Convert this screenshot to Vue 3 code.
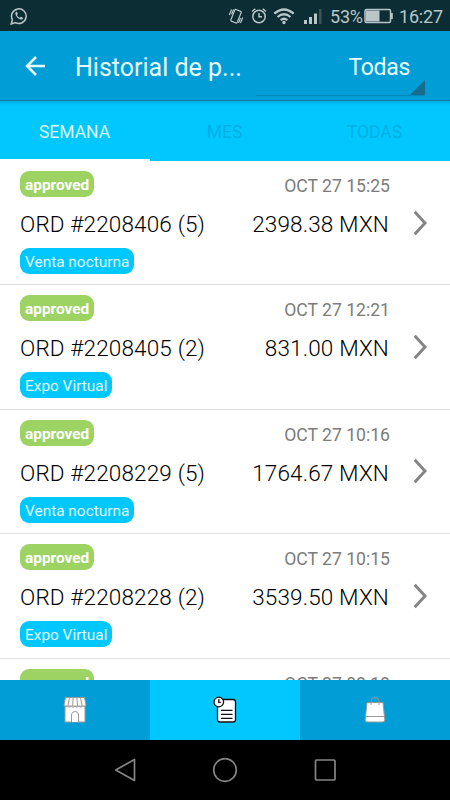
<script setup>
import { ref } from "vue";

const tabs = ["SEMANA", "MES", "TODAS"];
const activeTab = ref(0);
const activeNav = ref(1);

const orders = ref([
	{ id: 2208406, items: 5, total: "2398.38", date: "OCT 27 15:25", sale: "Venta nocturna" },
	{ id: 2208405, items: 2, total: "831.00", date: "OCT 27 12:21", sale: "Expo Virtual" },
	{ id: 2208229, items: 5, total: "1764.67", date: "OCT 27 10:16", sale: "Venta nocturna" },
	{ id: 2208228, items: 2, total: "3539.50", date: "OCT 27 10:15", sale: "Expo Virtual" },
	{ id: 2208227, items: 1, total: "942.00", date: "OCT 27 08:18", sale: "Expo Virtual" },
]);
</script>

<template>
	<div class="phone">
		<div class="status">
			<svg class="whatsapp" width="18" height="18" viewBox="0 0 18 18">
				<path d="M1.2 17l1.2-4.4A7.3 7.3 0 1 1 5.4 15.600Z" />
				<path class="fill" d="M6.300 4.800c-.9.500-1.200 1.500-.8 2.600 1 2.500 2.700 4.200 5.200 5 1.100.3 2.200-.2 2.400-1.500l-2-1.200-1.200 1c-1.400-.6-2.300-1.500-2.900-2.800l.8-1-.8-2.100z" />
			</svg>
			<div class="status-right">
				<svg class="vibrate" width="16" height="18" viewBox="0 0 16 18">
					<rect x="4.600" y="3" width="6.800" height="12.500" rx="1" transform="rotate(22 8 9.200)" />
					<path d="M3.600 2.500L1.300 8M5.600 2.500L3.600 7.500M14.700 10.500l-2.200 5.500M12.500 11l-2 5" />
				</svg>
				<svg class="alarm" width="16" height="18" viewBox="0 0 16 18">
					<circle cx="8" cy="9.500" r="6.200" />
					<path d="M8 6v3.700h3M1 4.500L4.200 1.800M15 4.500L11.800 1.800" />
				</svg>
				<svg class="wifi" width="22" height="18" viewBox="0 0 22 18">
					<path d="M1.300 6.700Q11-1.700 20.700 6.700M4.500 10Q11 4.400 17.500 10M7.700 13.100Q11 10.300 14.300 13.100" />
					<circle class="fill" cx="11" cy="15.500" r="1.700" />
				</svg>
				<svg class="signal" width="20" height="18" viewBox="0 0 20 18">
					<path class="fill" d="M1 13h3v4H1zM6 10h3v7H6zM11 6.500h3V17h-3z" />
					<path class="fill dim" d="M16 2h2.500v15H16z" />
				</svg>
				<span class="percent">53%</span>
				<svg class="battery" width="29" height="16" viewBox="0 0 29 16">
					<rect x="1" y="1.500" width="25.500" height="13" rx="1.500" />
					<path class="fill" d="M2 2.500h13.500v11H2zM27 5h1.800v6H27z" />
				</svg>
				<span class="clock">16:27</span>
			</div>
		</div>

		<header class="bar">
			<svg class="back" width="22" height="20" viewBox="0 0 22 20">
				<path d="M11 1L2 10l9 9M2 10h18" />
			</svg>
			<h1 class="title">Historial de p...</h1>
			<div class="spinner">
				<span class="choice">Todas</span>
				<svg class="corner" width="15" height="15" viewBox="0 0 15 15">
					<path d="M15 0v15H0z" />
				</svg>
			</div>
		</header>

		<nav class="tabs">
			<div
				v-for="(tab, i) in tabs"
				:key="tab"
				class="tab"
				:class="{ active: i === activeTab }"
				@click="activeTab = i"
			>
				<span>{{ tab }}</span>
			</div>
		</nav>

		<main class="list">
			<div v-for="order in orders" :key="order.id" class="order">
				<div class="order-top">
					<span class="pill approved">approved</span>
					<span class="date">{{ order.date }}</span>
				</div>
				<div class="order-main">
					<span class="name">ORD #{{ order.id }} ({{ order.items }})</span>
					<span class="total">{{ order.total }} MXN</span>
					<svg class="chevron" width="15" height="26" viewBox="0 0 15 26">
						<path d="M1.700 1.700L12 13 1.700 24.300" />
					</svg>
				</div>
				<span class="pill sale">{{ order.sale }}</span>
			</div>
		</main>

		<nav class="bottom">
			<div class="item" :class="{ active: activeNav === 0 }" @click="activeNav = 0">
				<svg class="grey" width="26" height="28" viewBox="0 0 26 28">
					<path d="M3 10h20v16H3zM3.500 1.500h19L24 9a2 2 0 0 1-3.400 1 2.200 2.200 0 0 1-3.800 0 2.200 2.200 0 0 1-3.800 0 2.200 2.200 0 0 1-3.800 0 2.200 2.200 0 0 1-3.800 0A2 2 0 0 1 2 9z" />
					<path d="M7.500 1.500L6 9.500M11.200 1.500l-.6 8M14.900 1.500l.6 8M18.500 1.500l1.500 8M9.500 26v-7a3.500 3.500 0 0 1 7 0v7" />
				</svg>
			</div>
			<div class="item" :class="{ active: activeNav === 1 }" @click="activeNav = 1">
				<svg class="black" width="26" height="28" viewBox="0 0 26 28">
					<rect x="5.500" y="3.500" width="18" height="22.500" rx="2.500" />
					<path d="M9 14.300h11.500M9 18.300h11.500M9 22.300h11.500" />
					<circle cx="6.800" cy="6" r="4.800" />
					<path d="M6.800 3v3.300h2" />
				</svg>
			</div>
			<div class="item" :class="{ active: activeNav === 2 }" @click="activeNav = 2">
				<svg class="grey" width="26" height="28" viewBox="0 0 26 28">
					<path d="M5 6.500h16l1.800 17.300q.1 2.200-2 2.200H5.200q-2.100 0-2-2.200zM3.300 20.500h19.400" />
					<path class="open" d="M9 9V5.500a4 4 0 0 1 8 0V9" />
				</svg>
			</div>
		</nav>

		<div class="system">
			<svg width="24" height="26" viewBox="0 0 24 26"><path d="M21.500 2.500v21L2.700 13z" /></svg>
			<svg width="26" height="26" viewBox="0 0 26 26"><circle cx="13" cy="13" r="11.300" /></svg>
			<svg width="24" height="26" viewBox="0 0 24 26"><rect x="2.500" y="3" width="19.500" height="20" rx="1" /></svg>
		</div>
	</div>
</template>

<style>
body {
	margin: 0;
	overflow: hidden;
}
</style>

<style scoped>
.phone {
	width: 450px;
	height: 800px;
	display: flex;
	flex-direction: column;
	overflow: hidden;
	background: white;
	font-family: Roboto, "Noto Sans", sans-serif;
}
svg {
	display: block;
	flex-shrink: 0;
	fill: none;
}
.status {
	height: 31px;
	flex-shrink: 0;
	display: flex;
	align-items: center;
	justify-content: space-between;
	padding: 0 8px 0 10px;
	background: #0c2d33;
	color: #b9c6c8;
}
.status svg {
	stroke: #b9c6c8;
	stroke-width: 1.5;
}
.status .fill {
	fill: #b9c6c8;
	stroke: none;
}
.status .dim {
	fill: #3c555b;
}
.status .vibrate {
	stroke-width: 1.2;
}
.status-right {
	display: flex;
	align-items: center;
	font-size: 18px;
	line-height: 31px;
}
.alarm {
	margin-left: 7px;
}
.wifi {
	margin-left: 6px;
}
.status .wifi path {
	stroke-width: 2.3;
}
.signal {
	margin-left: 8px;
}
.percent {
	width: 33px;
	margin-left: 7px;
	padding-top: 2px;
	letter-spacing: -0.2px;
}
.battery {
	margin-left: 1px;
}
.clock {
	margin-left: 6px;
	padding-top: 2px;
	width: 43px;
	letter-spacing: -0.2px;
}
.bar {
	height: 70px;
	flex-shrink: 0;
	display: flex;
	box-sizing: border-box;
	padding: 0 25px 0 25px;
	background: #009dd6;
	color: #e8faff;
	border-bottom: 1px solid #087ba9;
}
.back {
	margin-top: 25px;
	stroke: #e8faff;
	stroke-width: 2.5;
}
.title {
	width: 181px;
	margin: 0 0 0 28px;
	font-size: 25px;
	font-weight: 400;
	line-height: 73px;
	white-space: nowrap;
}
.spinner {
	flex: 1;
	height: 65px;
	box-sizing: border-box;
	display: flex;
	align-items: flex-end;
	justify-content: flex-end;
	border-bottom: 1px solid #0788ba;
	font-size: 23px;
	line-height: 54px;
}
.choice {
	letter-spacing: -0.3px;
}
.corner {
	fill: #176d90;
}
.tabs {
	height: 60px;
	flex-shrink: 0;
	display: flex;
	background: linear-gradient(#00a9dc, #00c8ff 4px);
}
.tab {
	width: 150px;
	box-sizing: border-box;
	padding-right: 1px;
	text-align: center;
	font-size: 17.500px;
	line-height: 62px;
	color: #00afe3;
}
.tab.active {
	color: #d9f8ff;
	border-bottom: 2px solid white;
}
.list {
	flex: 1;
	min-height: 0;
	overflow: hidden;
}
.order {
	height: 124.400px;
	box-sizing: border-box;
	padding: 10px 22px 0 20px;
	border-bottom: 1.500px solid #dedede;
}
.order-top {
	height: 26px;
	display: flex;
	justify-content: space-between;
}
.pill {
	display: block;
	width: fit-content;
	height: 26px;
	box-sizing: border-box;
	padding: 0 5px;
	border-radius: 9px;
	font-size: 15.400px;
	line-height: 28px;
	white-space: nowrap;
}
.approved {
	background: #9cd363;
	color: white;
	font-weight: 700;
}
.sale {
	background: #00c8ff;
	color: #e0f9ff;
}
.date {
	padding-right: 38px;
	font-size: 17.600px;
	line-height: 30px;
	color: #7c7c7c;
}
.order-main {
	height: 51px;
	display: flex;
	align-items: center;
	font-size: 22.500px;
	font-weight: 300;
	letter-spacing: 0.150px;
	color: #000;
}
.name {
	padding-top: 3px;
}
.total {
	margin-left: auto;
	padding-top: 3px;
}
.chevron {
	margin-left: 24px;
	stroke: #858585;
	stroke-width: 3;
}
.bottom {
	height: 60px;
	flex-shrink: 0;
	display: flex;
}
.item {
	flex: 1;
	display: flex;
	align-items: center;
	justify-content: center;
	background: #009dd6;
}
.item.active {
	background: #00c8ff;
}
.item svg {
	fill: white;
	stroke-width: 1;
}
.grey {
	stroke: #999;
}
.item .open {
	fill: none;
}
.black {
	stroke: #111;
}
.item .black {
	stroke-width: 1.300;
}
.system {
	height: 60px;
	flex-shrink: 0;
	display: flex;
	align-items: center;
	justify-content: center;
	gap: 75px;
	background: black;
}
.system svg {
	stroke: #858585;
	stroke-width: 1.700;
	stroke-linejoin: round;
}
</style>
